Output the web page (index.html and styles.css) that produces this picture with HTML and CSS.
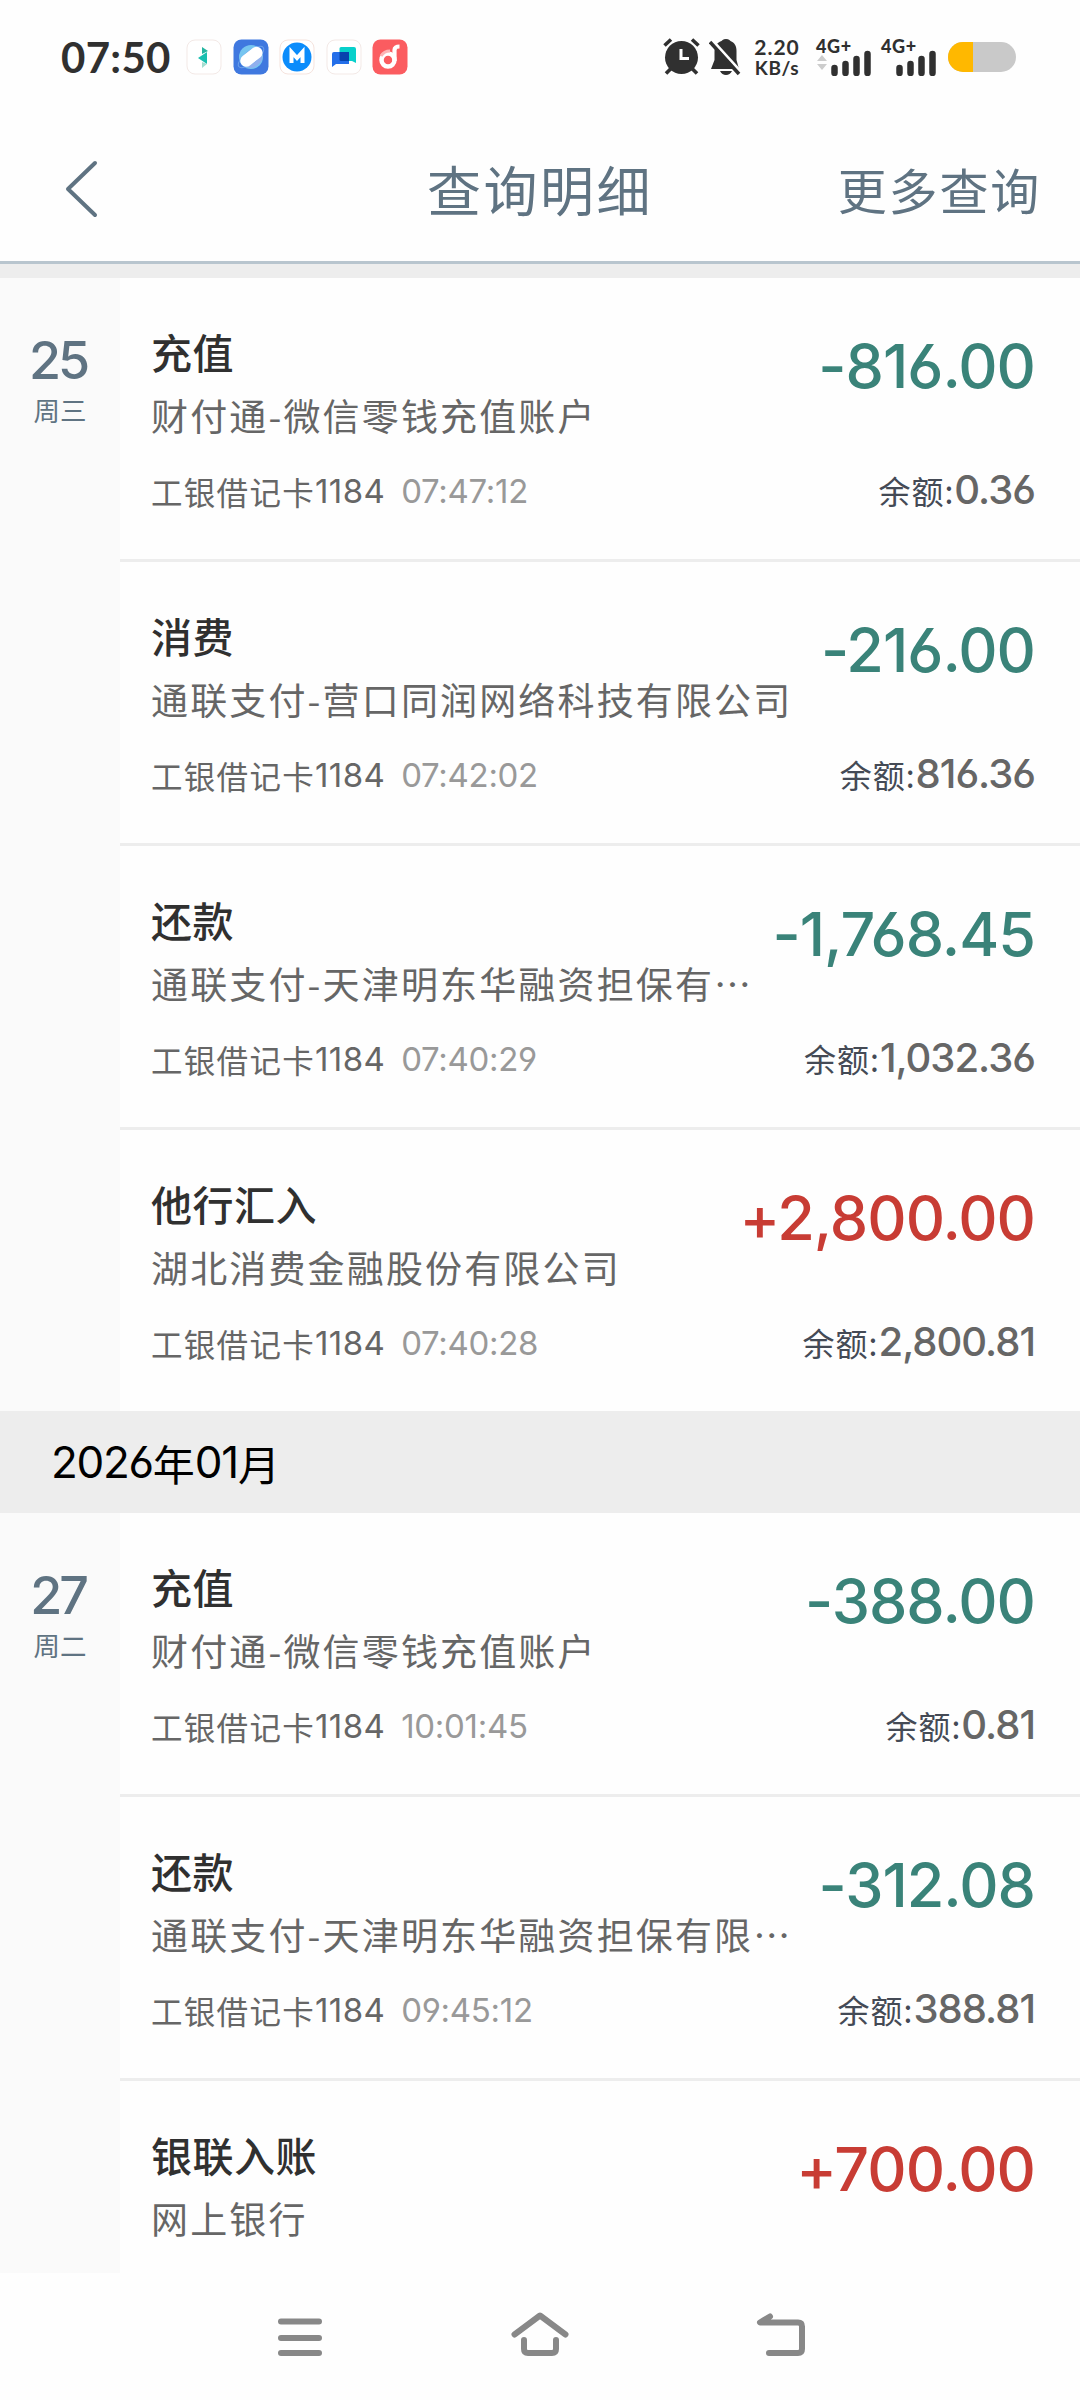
FILE: index.html
```html
<!DOCTYPE html>
<html lang="zh-CN">
<head>
<meta charset="utf-8">
<title>查询明细</title>
<link rel="stylesheet" href="styles.css">
</head>
<body>
<div class="status">
  <span class="clock">07:50</span>
  <div class="apps">
    <svg class="app" viewBox="0 0 36 36"><rect x="1" y="1" width="34" height="34" rx="8" fill="#fff" stroke="#f3e9e6"/><path d="M16 8l6 4-6 3z" fill="#25b5a0"/><path d="M12 19l9-6v12z" fill="#19bfb0"/><path d="M16 23l5 2-5 4z" fill="#a5ddd0"/></svg>
    <svg class="app" viewBox="0 0 36 36"><rect x=".5" y=".5" width="35" height="35" rx="8" fill="#3f78df"/><circle cx="18" cy="18" r="12" fill="#76c5f0"/><path d="M29 14a12 12 0 0 1-18 13z" fill="#91b0ee"/><ellipse cx="18" cy="18" rx="15.500" ry="6" transform="rotate(-38 18 18)" fill="none" stroke="#6ba0ea"/><rect x="6" y="12" width="25" height="12" rx="6" transform="rotate(-38 18 18)" fill="#fff"/></svg>
    <svg class="app" viewBox="0 0 36 36"><rect x="1" y="1" width="34" height="34" rx="8" fill="#fff" stroke="#f5e3dd"/><circle cx="18" cy="18" r="14.500" fill="#0b8cfb"/><path d="M12.500 24V13l5.500 6 5.500-6v11" fill="none" stroke="#fff" stroke-width="4"/></svg>
    <svg class="app" viewBox="0 0 36 36"><rect x="1" y="1" width="34" height="34" rx="8" fill="#fff" stroke="#f3e9e6"/><path d="M15 8h13q2 0 2 2v14l-4-2H15q-1.500 0-1.500-1.500V9.500Q13.500 8 15 8z" fill="#08d0cb"/><path d="M8 13h15v12H10l-4 3V15q0-2 2-2z" fill="#246fe9"/><path d="M13.500 13H23v9h-8q-1.500 0-1.500-1.500z" fill="#0743ae"/></svg>
    <svg class="app" viewBox="0 0 36 36"><rect x=".5" y=".5" width="35" height="35" rx="8" fill="#fb5c60"/><circle cx="16" cy="21" r="6.500" fill="none" stroke="#fff" stroke-width="4.500"/><path d="M22.500 22V11q0-3.500 5-3.500" fill="none" stroke="#fff" stroke-width="4.200"/><path d="M9 17q3-5 9-5" fill="none" stroke="#fdb4b5" stroke-width="3"/></svg>
  </div>
  <div class="indicators">
    <svg class="alarm" viewBox="0 0 37 38"><g stroke="#303030" stroke-width="3.600" stroke-linecap="butt"><path d="M1.500 7.500l6.500-6M35.500 7.500L29 1.500M3 35.500l5-5M34 35.500l-5-5"/></g><circle cx="18.500" cy="19.500" r="16.500" fill="#303030"/><path d="M18 11v9.500h8" fill="none" stroke="#fff" stroke-width="3"/></svg>
    <svg class="bell" viewBox="0 0 32 38"><path d="M17 1c-3 0-4.500 2-4.500 2-5 1.500-7 6-7 11v8L2 31h28l-2.500-9v-9c0-5-2-8.500-6-10 0 0-1.500-2-4.500-2zM11 33h12q-2 4-6 4t-6-4z" fill="#303030"/><path d="M3 2l29 32" stroke="#fff" stroke-width="3"/><path d="M1 4l29 32" stroke="#303030" stroke-width="3.500"/></svg>
    <div class="speed"><span>2.20</span><span>KB/s</span></div>
    <div class="signal"><span class="net">4G+</span>
      <svg viewBox="0 0 56 26"><path d="M1 11l5-6 5 6zM1 14l5 6 5-6z" fill="#ccc"/><path d="M18.500 18v5M29.500 14v9M40.500 9v14M51.500 4v19" stroke="#303030" stroke-width="6.500" stroke-linecap="round"/></svg></div>
    <div class="signal"><span class="net">4G+</span>
      <svg viewBox="0 0 56 26"><path d="M18.500 18v5M29.500 14v9M40.500 9v14M51.500 4v19" stroke="#303030" stroke-width="6.500" stroke-linecap="round"/></svg></div>
    <div class="battery"><span class="charge"></span></div>
  </div>
</div>
<header class="bar">
  <svg class="back" viewBox="0 0 34 60"><path d="M31 4L4 30l27 26" fill="none" stroke="#5f7382" stroke-width="4" stroke-linecap="round" stroke-linejoin="round"/></svg>
  <h1 class="title">查询明细</h1>
  <span class="more">更多查询</span>
</header>
<main class="list">
  <section class="group">
    <div class="day"><span class="date">25</span><span class="week">周三</span></div>
    <div class="rows">
      <article class="row"><div class="info"><p class="kind">充值</p><p class="party">财付通-微信零钱充值账户</p><p class="meta">工银借记卡<span class="num">1184</span><span class="time">07:47:12</span></p></div><div class="money"><p class="amount">-816.00</p><p class="balance">余额:<span class="rest">0.36</span></p></div></article>
      <article class="row"><div class="info"><p class="kind">消费</p><p class="party">通联支付-营口同润网络科技有限公司</p><p class="meta">工银借记卡<span class="num">1184</span><span class="time">07:42:02</span></p></div><div class="money"><p class="amount">-216.00</p><p class="balance">余额:<span class="rest">816.36</span></p></div></article>
      <article class="row"><div class="info"><p class="kind">还款</p><p class="party">通联支付-天津明东华融资担保有…</p><p class="meta">工银借记卡<span class="num">1184</span><span class="time">07:40:29</span></p></div><div class="money"><p class="amount">-1,768.45</p><p class="balance">余额:<span class="rest">1,032.36</span></p></div></article>
      <article class="row"><div class="info"><p class="kind">他行汇入</p><p class="party">湖北消费金融股份有限公司</p><p class="meta">工银借记卡<span class="num">1184</span><span class="time">07:40:28</span></p></div><div class="money"><p class="amount income">+2,800.00</p><p class="balance">余额:<span class="rest">2,800.81</span></p></div></article>
    </div>
  </section>
  <h2 class="month"><span class="mnum">2026</span>年<span class="mnum">01</span>月</h2>
  <section class="group">
    <div class="day"><span class="date">27</span><span class="week">周二</span></div>
    <div class="rows">
      <article class="row"><div class="info"><p class="kind">充值</p><p class="party">财付通-微信零钱充值账户</p><p class="meta">工银借记卡<span class="num">1184</span><span class="time">10:01:45</span></p></div><div class="money"><p class="amount">-388.00</p><p class="balance">余额:<span class="rest">0.81</span></p></div></article>
      <article class="row"><div class="info"><p class="kind">还款</p><p class="party">通联支付-天津明东华融资担保有限…</p><p class="meta">工银借记卡<span class="num">1184</span><span class="time">09:45:12</span></p></div><div class="money"><p class="amount">-312.08</p><p class="balance">余额:<span class="rest">388.81</span></p></div></article>
      <article class="row"><div class="info"><p class="kind">银联入账</p><p class="party">网上银行</p></div><div class="money"><p class="amount income">+700.00</p></div></article>
    </div>
  </section>
</main>
<nav class="nav">
  <svg viewBox="0 0 60 60"><path d="M11 14.500h38M11 31h38M11 46h38" fill="none" stroke="#888" stroke-width="6" stroke-linecap="round"/></svg>
  <svg viewBox="0 0 60 60"><path d="M4.500 27.500L30 8.500l25.500 19M14 33v9q0 4 4 4h24q4 0 4-4v-9" fill="none" stroke="#888" stroke-width="6" stroke-linecap="round" stroke-linejoin="round"/></svg>
  <svg viewBox="0 0 60 60"><path d="M20 9.500l-10 6h38q4 0 4 4V42q0 4-4 4H19" fill="none" stroke="#888" stroke-width="6" stroke-linecap="round" stroke-linejoin="round"/></svg>
</nav>
</body>
</html>
```
FILE: styles.css
```css
* { box-sizing: border-box; margin: 0; padding: 0; }
body {
  width: 1080px; height: 2400px; overflow: hidden;
  display: flex; flex-direction: column;
  background: #fefefe;
  font-family: "Noto Sans CJK SC", sans-serif;
  font-weight: 400;
}
svg { display: block; flex: none; }
.clock, .date, .num, .time, .amount, .rest, .mnum {
  font-family: Inter, sans-serif;
  font-feature-settings: "cv03", "cv04";
}

.status { height: 114px; display: flex; align-items: center; padding: 0 64px 0 61px; color: #303030; }
.clock { width: 125px; font: 700 42px/50px Lato, sans-serif; letter-spacing: .3px; white-space: nowrap; }
.apps { display: flex; gap: 10.500px; }
.app { width: 36px; height: 36px; }
.indicators { margin-left: auto; display: flex; align-items: center; }
.alarm { width: 37px; height: 38px; }
.bell { width: 32px; height: 38px; margin-left: 9px; }
.speed { width: 48px; margin-left: 12px; display: flex; flex-direction: column; align-items: center; font: 700 19px/21px Lato, sans-serif; letter-spacing: .6px; }
.speed span:first-child { font-size: 21px; letter-spacing: 1px; }
.signal { width: 56px; height: 38px; margin-left: 15px; }
.signal + .signal { margin-left: 9px; }
.signal svg { width: 56px; height: 26px; margin-top: -4px; }
.net { display: block; font: 900 18px/16px Lato, sans-serif; letter-spacing: .6px; }
.battery { width: 68px; height: 30px; margin-left: 11px; border-radius: 15px; background: #c9c9c9; overflow: hidden; }
.charge { display: block; width: 25px; height: 30px; background: #ffb800; }

.bar {
  height: 150px; display: grid; grid-template-columns: 1fr auto 1fr; align-items: center;
  padding: 2px 39px 0 39px; border-bottom: 3px solid #b8c5ce; color: #5f7382;
}
.back { width: 34px; height: 60px; margin-left: 25px; }
.title { font-size: 54px; font-weight: 400; letter-spacing: 2.500px; line-height: 70px; white-space: nowrap; }
.more { justify-self: end; font-size: 49px; letter-spacing: 1.800px; line-height: 70px; white-space: nowrap; }

.list { height: 2009px; overflow: hidden; border-top: 14px solid #ededed; }
.group { display: flex; }
.day { width: 120px; flex: none; padding-top: 53px; background: #fafafa; display: flex; flex-direction: column; align-items: center; color: #5f7382; }
.date { font-size: 52px; font-weight: 500; line-height: 60px; letter-spacing: -3px; padding-right: 4px; }
.week { font-size: 26.500px; line-height: 40px; margin-top: -1px; }
.rows { flex: 1; }
.row { height: 284px; border-bottom: 3px solid #ededed; padding: 43px 45px 0 31px; display: flex; justify-content: space-between; white-space: nowrap; }
.rows .row:last-child { height: 281px; border-bottom: 0; }
.kind { font-size: 41px; font-weight: 500; letter-spacing: .5px; line-height: 60px; color: #303030; }
.party { font-size: 37px; letter-spacing: 2.150px; line-height: 60px; margin-top: 4px; color: #666; }
.meta { display: flex; font-size: 31.500px; letter-spacing: 1.300px; line-height: 50px; margin-top: 21px; color: #666; }
.num { font-size: 33px; letter-spacing: .4px; }
.time { font-size: 33px; letter-spacing: -.3px; margin-left: 16px; color: #999; }
.money { display: flex; flex-direction: column; align-items: flex-end; }
.amount { font-size: 61px; font-weight: 500; letter-spacing: -1px; line-height: 80px; margin-top: 5px; color: #3a8379; font-feature-settings: "cv03", "cv04", "calt" 0; }
.income { color: #c83c34; }
.balance { display: flex; align-items: center; font-size: 32px; letter-spacing: 1px; line-height: 50px; margin-top: 59px; color: #444a55; }
.rest { font-size: 40px; font-weight: 500; letter-spacing: -1px; color: #666; }
.month { height: 102px; padding-left: 51px; display: flex; align-items: center; background: #ededed; color: #000; font-size: 42px; font-weight: 400; }
.mnum { font-size: 44px; letter-spacing: -1.300px; }

.nav { height: 127px; display: flex; justify-content: center; align-items: center; gap: 180px; background: #fefefe; }
.nav svg { width: 60px; height: 60px; }
```
